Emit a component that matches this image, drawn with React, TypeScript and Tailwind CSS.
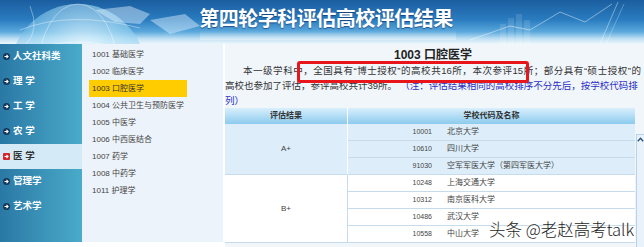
import type { ReactNode } from "react";

const subjects = [
  { label: "人文社科类" },
  { label: "理 学" },
  { label: "工 学" },
  { label: "农 学" },
  { label: "医 学", active: true },
  { label: "管理学" },
  { label: "艺术学" },
];

const disciplines = [
  "1001 基础医学",
  "1002 临床医学",
  "1003 口腔医学",
  "1004 公共卫生与预防医学",
  "1005 中医学",
  "1006 中西医结合",
  "1007 药学",
  "1008 中药学",
  "1011 护理学",
];

const groups = [
  {
    grade: "A+",
    tint: true,
    schools: [
      ["10001", "北京大学"],
      ["10610", "四川大学"],
      ["91030", "空军军医大学（第四军医大学）"],
    ],
  },
  {
    grade: "B+",
    tint: false,
    schools: [
      ["10248", "上海交通大学"],
      ["10312", "南京医科大学"],
      ["10486", "武汉大学"],
      ["10558", "中山大学"],
    ],
  },
];

function ArrowIcon({ active }: { active?: boolean }) {
  return (
    <span
      className={
        active
          ? "w-[7px] h-[7px] rounded-[1px] bg-[#d3242a] flex items-center justify-center shrink-0"
          : "w-[7px] h-[7px] rounded-full bg-[#15375a] flex items-center justify-center shrink-0"
      }
    >
      <svg width="5" height="5" viewBox="0 0 6 6">
        <path d="M0.6 3h4.2M3 1.1 4.9 3 3 4.9" stroke="white" strokeWidth="1.3" fill="none" />
      </svg>
    </span>
  );
}

function Header() {
  return (
    <div className="relative h-[44px] overflow-hidden bg-[linear-gradient(180deg,#1b5e9f_0%,#2a7cc0_45%,#5aa8dc_72%,#bfe0f4_88%,#eef7fc_100%)]">
      <svg className="absolute inset-0" width="644" height="44" viewBox="0 0 644 44">
        <defs>
          <radialGradient id="globe" cx="0.55" cy="0.35" r="0.7">
            <stop offset="0" stopColor="#e8f7ff" stopOpacity="0.9" />
            <stop offset="0.6" stopColor="#8fd0f0" stopOpacity="0.55" />
            <stop offset="1" stopColor="#3a8fd0" stopOpacity="0.1" />
          </radialGradient>
          <linearGradient id="shine" x1="0" y1="0" x2="0" y2="1">
            <stop offset="0" stopColor="#ffffff" stopOpacity="0" />
            <stop offset="1" stopColor="#ffffff" stopOpacity="0.35" />
          </linearGradient>
        </defs>
        <circle cx="78" cy="72" r="68" fill="url(#globe)" />
        <g stroke="#ffffff" strokeOpacity="0.55" fill="none" strokeWidth="0.7">
          <ellipse cx="78" cy="72" rx="40" ry="68" />
          <ellipse cx="78" cy="72" rx="66" ry="30" />
          <path d="M20 30 Q70 10 140 28" />
          <path d="M30 6 Q40 30 26 44" />
        </g>
        <g fill="#dff2ff" fillOpacity="0.45">
          <path d="M95 10 L130 6 L150 14 L140 24 L115 22 Z" />
          <path d="M150 20 L185 14 L200 26 L170 34 Z" />
        </g>
        {/* soft reflection band under the title */}
        <rect x="200" y="30" width="256" height="10" fill="url(#shine)" />
        <g fill="#ffffff" fillOpacity="0.12">
          <rect x="500" y="24" width="6" height="20" />
          <rect x="508" y="18" width="6" height="26" />
          <rect x="516" y="14" width="6" height="30" />
          <rect x="524" y="20" width="6" height="24" />
        </g>
        <polyline
          points="470,40 510,26 530,30 560,12 585,22 612,4"
          stroke="#ffffff"
          strokeOpacity="0.55"
          strokeWidth="0.8"
          fill="none"
        />
        <path d="M600 44 L618 2" stroke="#ffffff" strokeOpacity="0.5" strokeWidth="0.8" />
        <path d="M606 44 L624 4" stroke="#ffffff" strokeOpacity="0.35" strokeWidth="0.8" />
      </svg>
      <div className="relative flex justify-center pl-[8px] pt-[7px]">
        <div className="text-[20px] leading-[24px] font-bold text-white tracking-[-0.5px] [text-shadow:0_1px_1px_rgba(10,40,90,0.6)]">
          第四轮学科评估高校评估结果
        </div>
      </div>
    </div>
  );
}

function Cell({ children, className }: { children?: ReactNode; className?: string }) {
  return <div className={className}>{children}</div>;
}

export default function App() {
  return (
    <div
      lang="zh-CN"
      className="relative w-[644px] h-[247px] overflow-hidden bg-white text-[#333] font-['Liberation_Sans','Noto_Sans_CJK_SC',sans-serif]"
    >
      <Header />
      <div className="flex h-[203px]">
        {/* subject categories */}
        <div className="w-[82px] h-[198px] bg-[linear-gradient(90deg,#2a78a5,#4aabca)] flex flex-col">
          {subjects.map((s) => (
            <div
              key={s.label}
              className={
                s.active
                  ? "h-[25px] flex items-center gap-[3px] pl-[3px] bg-[#d5eaf7] text-[#333] text-[9.5px] font-bold"
                  : "h-[25px] flex items-center gap-[3px] pl-[3px] text-white text-[9.5px] font-bold"
              }
            >
              <ArrowIcon active={s.active} />
              <span>{s.label}</span>
            </div>
          ))}
        </div>

        {/* disciplines */}
        <div className="w-[141px] h-[198px] bg-[#edf3fa] pt-[2px] pl-[7px]">
          {disciplines.map((d) => (
            <div
              key={d}
              className={
                d.startsWith("1003")
                  ? "w-[98px] h-[17px] flex items-center pl-[3px] bg-[#ffcc00] text-[8px] text-[#333]"
                  : "h-[17px] flex items-center pl-[3px] text-[8px] text-[#444]"
              }
            >
              {d}
            </div>
          ))}
        </div>

        {/* main */}
        <div className="flex-1 border-l-2 border-white bg-[#f1f6fb] flex">
          <div className="w-[410px] pt-[3px]">
            <div className="h-[16px] flex items-center justify-center text-[12px] font-bold text-[#222] pl-[6px]">
              1003 口腔医学
            </div>
            <div className="text-[9.5px] text-[#333]">
              <div className="h-[15px] leading-[15px] pl-[18px] w-[416px] text-justify [text-align-last:justify] whitespace-nowrap overflow-visible">
                本一级学科中，全国具有“博士授权”的高校共16所，本次参评15所；部分具有“硕士授权”的
              </div>
              <div className="h-[15px] leading-[15px] w-[416px] whitespace-nowrap">
                高校也参加了评估，参评高校共计39所。
                <span className="text-[#2b2fc4] pl-[8px]">（注：评估结果相同的高校排序不分先后，按学校代码排</span>
              </div>
              <div className="h-[15px] leading-[15px] text-[#2b2fc4]">列）</div>
            </div>

            {/* results table */}
            <div className="grid grid-cols-[123px_90px_197px] text-[8px]">
              <div className="h-[16px] flex items-center justify-center font-bold text-[#333] border-r border-white bg-[linear-gradient(180deg,#d9effc,#8ccbee)]">
                评估结果
              </div>
              <div className="col-span-2 h-[16px] flex items-center justify-center font-bold text-[#333] bg-[linear-gradient(180deg,#d9effc,#8ccbee)]">
                学校代码及名称
              </div>
              {groups.map((g) => (
                <GroupRows key={g.grade} grade={g.grade} tint={g.tint} schools={g.schools} />
              ))}
            </div>
          </div>

          {/* floating side tool */}
          <div className="flex-1 pt-[90px] pl-[1px]">
            <div className="h-full border-l border-t border-[#b8d2e6] bg-[#e9f2fa] flex justify-center pt-[2px]">
              <svg width="7" height="5" viewBox="0 0 7 5">
                <path d="M0.8 4.2 3.5 1.2 6.2 4.2" stroke="#2a4f7a" strokeWidth="1.3" fill="none" />
              </svg>
            </div>
          </div>
        </div>
      </div>

      {/* highlight mark */}
      <div className="absolute left-[297px] top-[61px] w-[232px] h-[22px] border-[3px] border-[#e8161b] rounded-[3px]" />

      {/* watermark */}
      <div className="absolute left-[489px] top-[218px] text-[16.5px] leading-[22px] text-[#1e1e1e] whitespace-nowrap font-['Noto_Sans_CJK_SC',sans-serif] font-light [text-shadow:0_0_2px_#fff,0_0_2px_#fff]">
        头条 @老赵高考talk
      </div>
    </div>
  );
}

function GroupRows({
  grade,
  tint,
  schools,
}: {
  grade: string;
  tint: boolean;
  schools: string[][];
}) {
  const rowBg = tint ? "bg-[#ddeefa]" : "bg-white";
  return (
    <>
      <Cell
        className={`flex items-center justify-center text-[8px] text-[#444] border-b border-r ${
          tint ? "border-r-white border-b-[#c6dbeb]" : "border-r-[#c6dbeb] border-b-[#c6dbeb]"
        } ${rowBg} ${schools.length === 3 ? "row-span-3" : "row-span-4"}`}
      >
        {grade}
      </Cell>
      {schools.map(([code, name]) => (
        <div key={code} className="contents">
          <Cell className={`h-[17px] flex items-center justify-end pr-[6px] text-[7px] text-[#444] border-b border-[#c6dbeb] ${rowBg}`}>
            {code}
          </Cell>
          <Cell className={`h-[17px] flex items-center pl-[9px] text-[8px] text-[#444] border-b border-[#c6dbeb] ${rowBg}`}>
            {name}
          </Cell>
        </div>
      ))}
    </>
  );
}
